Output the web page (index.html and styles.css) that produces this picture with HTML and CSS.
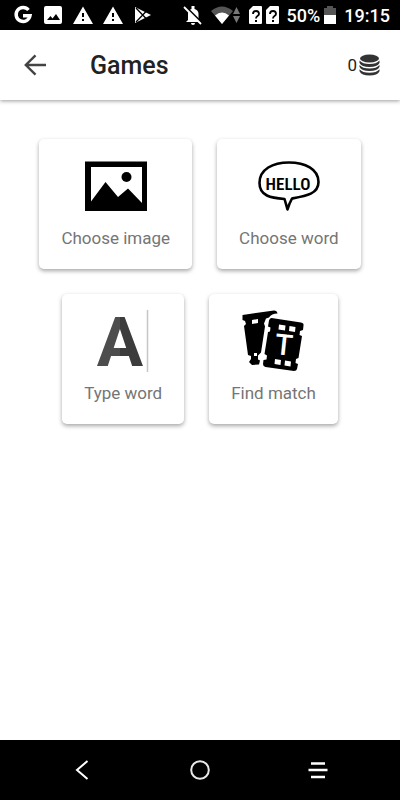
FILE: index.html
```
<!DOCTYPE html>
<html lang="en">
<head>
<meta charset="utf-8">
<meta name="viewport" content="width=device-width, initial-scale=1">
<title>Games</title>
<link rel="stylesheet" href="styles.css">
</head>
<body>
<div class="status">
  <div class="status-left">
    <svg class="status-icon" viewBox="0 0 20 20"><path d="M15.500 5A7 7 0 1 0 17 10.800H10" fill="none" stroke="#fff" stroke-width="3.400"/></svg>
    <svg class="status-icon" viewBox="0 0 20 20"><path fill="#fff" fill-rule="evenodd" d="M3 1h14q2 0 2 2v14q0 2-2 2H3q-2 0-2-2V3q0-2 2-2zM4 15h13l-4-6-3.500 4.500-2-2.500z"/></svg>
    <svg class="status-icon" viewBox="0 0 20 20"><path fill="#fff" fill-rule="evenodd" d="M10 1.500 20 19H0zM9 8v4h2V8zM9 14v2h2v-2z"/></svg>
    <svg class="status-icon" viewBox="0 0 20 20"><path fill="#fff" fill-rule="evenodd" d="M10 1.500 20 19H0zM9 8v4h2V8zM9 14v2h2v-2z"/></svg>
    <svg class="status-icon" viewBox="0 0 20 20"><path fill="#fff" d="M2 2 18 10 2 18z"/><path d="M3 3 14 14.500M3 17 14 5.500" stroke="#000" stroke-width="1.300"/></svg>
  </div>
  <div class="status-right">
    <svg class="status-icon" viewBox="0 0 20 20"><path fill="#fff" d="M8.500 4V1h3v3q4 1 4 5v6l2 2H3l2-2V9q0-4 3.500-5zM8 18h4q0 2-2 2t-2-2z"/><path d="M1.500 .5 20 19" stroke="#000" stroke-width="2"/><path d="M1 2 18 19" stroke="#fff" stroke-width="1.800"/></svg>
    <svg class="wifi" viewBox="0 0 30 20"><path fill="#555" d="M0 6q11-9 22 0L11 19z"/><path fill="#fff" d="M4 10.500q7-6 14 0L11 19z"/><path fill="#777" d="M25.500 2l3.500 7h-7zM25.500 18l-3.500-7h7z"/></svg>
    <svg class="sims" viewBox="0 0 30 20"><path fill="#fff" d="M4 1h8q1 0 1 1v16q0 1-1 1H1q-1 0-1-1V5zM21 1h8q1 0 1 1v16q0 1-1 1H18q-1 0-1-1V5z"/><path d="M4 9q0-3 3-3t3 3q0 1-1.500 2T7 13.500M21 9q0-3 3-3t3 3q0 1-1.500 2T24 13.500" fill="none" stroke="#000" stroke-width="1.800"/><path d="M6 15h2v2H6zM23 15h2v2h-2z"/></svg>
    <span class="battery-text">50%</span>
    <svg class="battery" viewBox="0 0 12 20"><path fill="#555" d="M0 3h3V1h6v2h3v7H0z"/><path fill="#fff" d="M0 10h12v9H0z"/></svg>
    <time class="clock">19:15</time>
  </div>
</div>
<header class="bar">
  <button class="back" type="button" aria-label="Back"><svg viewBox="0 0 22 22"><path d="M22 11H2M11.500 1.300 1.800 11l9.700 9.700" fill="none" stroke="#444" stroke-width="2.400"/></svg></button>
  <h1>Games</h1>
  <div class="coins"><span>0</span>
    <svg viewBox="0 0 20 22"><g fill="#333"><ellipse cx="10" cy="4.500" rx="9.500" ry="4"/><path d="M0 6.500q3 3.500 10 3.500t10-3.500V9q-2 4-10 4T0 9zM0 11q3 3.500 10 3.500T20 11v2q-2 4-10 4T0 13zM0 15.200q3 3.500 10 3.500t10-3.500v2q-2 4.300-10 4.300T0 17.200z"/></g></svg>
  </div>
</header>
<main class="games">
  <button class="card" type="button">
    <svg viewBox="0 0 62 62"><path fill-rule="evenodd" d="M0 6.500h62V56H0zM6 12v34.500L20.500 27 33 42l10-8.500L57 48V12z"/><circle cx="41.500" cy="22" r="5"/></svg>
    <span>Choose image</span>
  </button>
  <button class="card" type="button">
    <svg viewBox="0 0 62 62"><path d="M26.500 44C13 43 1.500 41 1.500 28 1.500 14 15 7.500 31 7.500S60.500 14 60.500 27C60.500 39 48 41 34 43.500Q31 49 29.500 54.500 28 49 26.500 44z" fill="none" stroke="#000" stroke-width="2.600" stroke-linejoin="round"/><text class="hello" x="30" y="35" text-anchor="middle">HELLO</text></svg>
    <span>Choose word</span>
  </button>
  <button class="card" type="button">
    <svg viewBox="0 0 62 62"><defs><linearGradient id="tone"><stop offset=".5" stop-color="#4d4d4d"/><stop offset=".5" stop-color="#3c3c3c"/></linearGradient></defs><text class="big-a" x="28" y="56" text-anchor="middle" fill="url(#tone)">A</text><path d="M55.500 0v62" stroke="#c6c6c6" stroke-width="1.500"/></svg>
    <span>Type word</span>
  </button>
  <button class="card" type="button">
    <svg viewBox="0 0 62 62"><path d="M-.5 5 31 .5q3 0 3.500 3-6 0-8.500 4l-3 1-2 5 1 3-4 26-3 3v4l2 1-1 4-7 .5-3-3 2-3v-3l-3-1L1 16l2-2-1-3-2.500-1z"/><path fill="#fff" d="M9 10l6-1v4l-6 1zM11 43h3v3h-3z"/><path d="M28.500 8 58 12.500q3 .5 2.500 3L60 20l-3 1-.5 4 2.500 1-3.500 22-2.500 1-.5 4 2.500 1-1 5q-.5 2-3 2L22.500 57q-2.500-.5-2.500-3l.5-4 3-.5.5-4-2.500-1.500L25 22l2-.5.500-4-2.500-1 1-6q.5-2.500 2.500-2.500z"/><path fill="#fff" d="M36 14.500l6.500 1-.5 5-6.500-1zM46.500 16l6 1-.5 5-6-1zM32 49l6 1-.5 5-6-1zM42 50.500l6 1-.5 5-6-1z"/><g transform="rotate(6 41 34)"><text class="tile-t" x="41" y="45" text-anchor="middle">T</text></g></svg>
    <span>Find match</span>
  </button>
</main>
<nav class="system">
  <button type="button" aria-label="Back"><svg viewBox="0 0 20 20"><path d="M15.500 1 5 10l10.500 9" fill="none" stroke="#fff" stroke-width="2"/></svg></button>
  <button type="button" aria-label="Home"><svg viewBox="0 0 20 20"><circle cx="10" cy="10" r="8.800" fill="none" stroke="#e8e8e8" stroke-width="2"/></svg></button>
  <button type="button" aria-label="Recent apps"><svg viewBox="0 0 20 20"><path d="M3 3.500h14M.5 10h19M3 17h14" stroke="#fff" stroke-width="2.300"/></svg></button>
</nav>
</body>
</html>
```
FILE: styles.css
```
* { box-sizing: border-box; }
body {
  margin: 0;
  min-height: 100vh;
  display: flex;
  flex-direction: column;
  background: #fff;
  color: #222;
  font-family: Roboto, sans-serif;
}
svg { display: block; overflow: visible; }
button {
  border: 0;
  padding: 0;
  background: none;
  font: inherit;
  color: inherit;
}
.status {
  display: flex;
  justify-content: space-between;
  align-items: center;
  height: 30px;
  padding: 0 10px 0 13px;
  background: #000;
  color: #fff;
  font-size: 18px;
  font-weight: 500;
}
.status-left, .status-right { display: flex; align-items: center; }
.status-left { gap: 10px; }
.status-right { gap: 8px; }
.status-icon { width: 20px; height: 20px; }
.wifi, .sims { width: 30px; height: 20px; }
.battery { width: 12px; height: 20px; margin-left: -4px; }
.bar {
  display: flex;
  align-items: center;
  height: 70px;
  padding: 0 20px 0 24px;
  background: #fff;
  box-shadow: 0 1px 4px rgba(0, 0, 0, .4);
}
.back svg { width: 22px; height: 22px; }
.bar h1 {
  flex: 1;
  margin: 0 0 0 44px;
  font-size: 25px;
  font-weight: 500;
}
.coins {
  display: flex;
  align-items: center;
  gap: 2px;
  font-size: 17px;
}
.coins svg { width: 21px; height: 22px; }
.games {
  flex: 1;
  display: flex;
  flex-wrap: wrap;
  justify-content: center;
  align-content: flex-start;
  gap: 25px;
  padding: 39px 24px;
}
.card {
  display: flex;
  flex-direction: column;
  align-items: center;
  gap: 11px;
  padding: 16px 22px 21px;
  border-radius: 5px;
  background: #fff;
  box-shadow: 0 2px 4px rgba(0, 0, 0, .35);
  color: #757575;
  font-size: 17px;
  line-height: 20px;
}
.card svg { width: 62px; height: 62px; }
.hello { font: 600 17px "Roboto Condensed", Roboto, sans-serif; }
.big-a { font: bold 69px Roboto, sans-serif; }
.tile-t { font: 500 29px Roboto, sans-serif; fill: #fff; }
.system {
  display: flex;
  justify-content: space-between;
  align-items: center;
  height: 60px;
  padding: 0 72px;
  background: #000;
}
.system svg { width: 20px; height: 20px; }
```
